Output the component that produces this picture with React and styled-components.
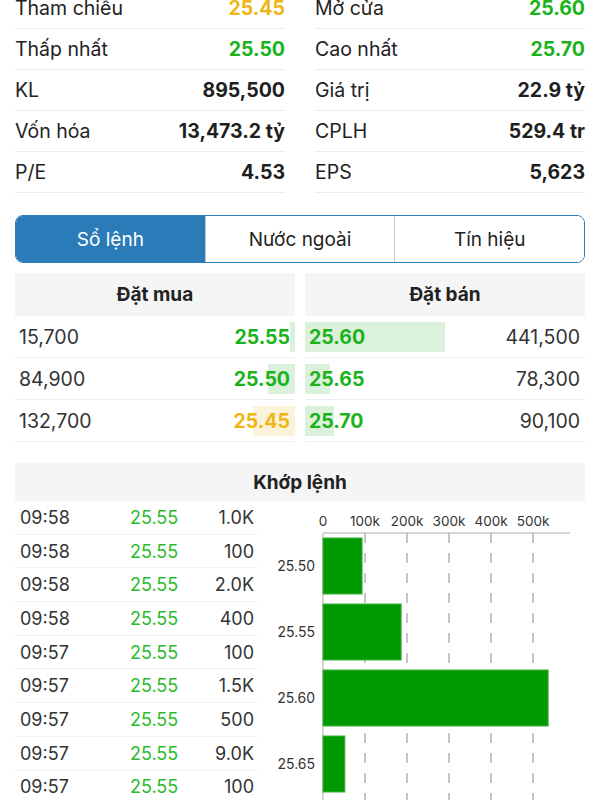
import { Fragment } from "react";
import styled, { createGlobalStyle } from "styled-components";

const GlobalStyle = createGlobalStyle`
  body {
    margin: 0;
    background: #ffffff;
    font-family: Inter, "Noto Sans", sans-serif;
    color: #1f1f1f;
  }
`;

const GREEN = "#1bb21b";
const YELLOW = "#efb615";
const DARK = "#1f1f1f";

const stats = [
  ["Tham chiếu", "25.45", YELLOW, "Mở cửa", "25.60", GREEN],
  ["Thấp nhất", "25.50", GREEN, "Cao nhất", "25.70", GREEN],
  ["KL", "895,500", DARK, "Giá trị", "22.9 tỷ", DARK],
  ["Vốn hóa", "13,473.2 tỷ", DARK, "CPLH", "529.4 tr", DARK],
  ["P/E", "4.53", DARK, "EPS", "5,623", DARK],
];

const bids = [
  { qty: "15,700", vol: 15700, price: "25.55", color: GREEN, bar: "#dcf1dc" },
  { qty: "84,900", vol: 84900, price: "25.50", color: GREEN, bar: "#dcf1dc" },
  { qty: "132,700", vol: 132700, price: "25.45", color: YELLOW, bar: "#fbf2da" },
];

const asks = [
  { qty: "441,500", vol: 441500, price: "25.60" },
  { qty: "78,300", vol: 78300, price: "25.65" },
  { qty: "90,100", vol: 90100, price: "25.70" },
];

const trades = [
  ["09:58", "1.0K"],
  ["09:58", "100"],
  ["09:58", "2.0K"],
  ["09:58", "400"],
  ["09:57", "100"],
  ["09:57", "1.5K"],
  ["09:57", "500"],
  ["09:57", "9.0K"],
  ["09:57", "100"],
];

// matched volume per price, in thousands
const matched = [
  { price: "25.50", vol: 93 },
  { price: "25.55", vol: 186 },
  { price: "25.60", vol: 536 },
  { price: "25.65", vol: 52 },
];

const BAR_SCALE = 140 / 441500;

export default function App() {
  return (
    <Page>
      <GlobalStyle />
      <StatsGrid>
        {stats.map((s) => (
          <Fragment key={s[0]}>
            <StatRow>
              <Label>{s[0]}</Label>
              <Value $color={s[2]}>{s[1]}</Value>
            </StatRow>
            <StatRow>
              <Label>{s[3]}</Label>
              <Value $color={s[5]}>{s[4]}</Value>
            </StatRow>
          </Fragment>
        ))}
      </StatsGrid>

      <Tabs>
        <Tab $active>Sổ lệnh</Tab>
        <Tab>Nước ngoài</Tab>
        <Tab>Tín hiệu</Tab>
      </Tabs>

      <OrderBook>
        <BookSide>
          <BookHeader>Đặt mua</BookHeader>
          {bids.map((b) => (
            <BookRow key={b.price}>
              <DepthBar $side="right" $color={b.bar} style={{ width: b.vol * BAR_SCALE }} />
              <Qty>{b.qty}</Qty>
              <Price $color={b.color}>{b.price}</Price>
            </BookRow>
          ))}
        </BookSide>
        <BookSide>
          <BookHeader>Đặt bán</BookHeader>
          {asks.map((a) => (
            <BookRow key={a.price}>
              <DepthBar $side="left" $color="#dcf1dc" style={{ width: a.vol * BAR_SCALE }} />
              <Price $color={GREEN}>{a.price}</Price>
              <Qty>{a.qty}</Qty>
            </BookRow>
          ))}
        </BookSide>
      </OrderBook>

      <MatchHeader>Khớp lệnh</MatchHeader>
      <MatchBody>
        <TradeList>
          {trades.map((t, i) => (
            <TradeRow key={i}>
              <span>{t[0]}</span>
              <TradePrice>25.55</TradePrice>
              <TradeVol>{t[1]}</TradeVol>
            </TradeRow>
          ))}
        </TradeList>
        <VolumeChart />
      </MatchBody>
    </Page>
  );
}

function VolumeChart() {
  const x0 = 65;
  const k = 0.42;
  const ticks = [0, 100, 200, 300, 400, 500];
  return (
    <svg width="327" height="300" viewBox="0 0 327 300">
      {ticks.map((t) => (
        <text
          key={t}
          x={x0 + t * k}
          y="25"
          textAnchor="middle"
          fontSize="13.5"
          fill="#333"
          fontFamily="Inter, sans-serif"
        >
          {t === 0 ? "0" : `${t}k`}
        </text>
      ))}
      <line x1={x0} y1="32" x2="312" y2="32" stroke="#c8c8c8" strokeWidth="1.5" />
      <line x1={x0} y1="32" x2={x0} y2="300" stroke="#c8c8c8" strokeWidth="1.5" />
      {ticks.slice(1).map((t) => (
        <line
          key={t}
          x1={x0 + t * k}
          y1="32"
          x2={x0 + t * k}
          y2="300"
          stroke="#b4b4b4"
          strokeWidth="1.5"
          strokeDasharray="10 10"
        />
      ))}
      {matched.map((m, i) => (
        <g key={m.price}>
          <rect
            x={x0}
            y={37 + i * 66}
            width={m.vol * k}
            height="56"
            fill="#009a00"
            stroke="#3fae3f"
            strokeWidth="1"
          />
          <text
            x="57"
            y={37 + i * 66 + 33}
            textAnchor="end"
            fontSize="14"
            fill="#333"
            fontFamily="Inter, sans-serif"
          >
            {m.price}
          </text>
        </g>
      ))}
    </svg>
  );
}

const Page = styled.div`
  width: 600px;
  height: 800px;
  overflow: hidden;
`;

const StatsGrid = styled.div`
  display: grid;
  grid-template-columns: 1fr 1fr;
  column-gap: 30px;
  padding: 0 15px;
  margin-top: -12px;
`;

const StatRow = styled.div`
  display: flex;
  justify-content: space-between;
  align-items: center;
  height: 40px;
  border-bottom: 1px solid #ececec;
`;

const Label = styled.span`
  font-size: 19.5px;
  color: #222;
`;

const Value = styled.span`
  font-size: 19.5px;
  font-weight: 700;
  color: ${(p) => p.$color};
`;

const Tabs = styled.div`
  display: flex;
  margin: 22px 15px 0;
  height: 46px;
  border: 1.5px solid #2b7bb9;
  border-radius: 8px;
  overflow: hidden;
`;

const Tab = styled.div`
  flex: 1;
  display: flex;
  align-items: center;
  justify-content: center;
  font-size: 19px;
  color: ${(p) => (p.$active ? "#ffffff" : "#222")};
  background: ${(p) => (p.$active ? "#2b7bb9" : "#ffffff")};
  & + & {
    border-left: 1px solid #c9c9c9;
  }
`;

const OrderBook = styled.div`
  display: grid;
  grid-template-columns: 1fr 1fr;
  column-gap: 10px;
  margin: 10px 15px 0;
`;

const BookSide = styled.div`
  display: flex;
  flex-direction: column;
`;

const BookHeader = styled.div`
  height: 43px;
  display: flex;
  align-items: center;
  justify-content: center;
  background: #f5f5f5;
  font-size: 19px;
  font-weight: 700;
  color: #222;
`;

const BookRow = styled.div`
  position: relative;
  display: flex;
  justify-content: space-between;
  align-items: center;
  height: 41px;
  padding: 0 5px 0 4px;
  border-bottom: 1px solid #eeeeee;
`;

const DepthBar = styled.div`
  position: absolute;
  top: 6px;
  bottom: 5px;
  ${(p) => p.$side}: 0;
  background: ${(p) => p.$color};
`;

const Qty = styled.span`
  position: relative;
  font-size: 19.5px;
  color: #333;
`;

const Price = styled.span`
  position: relative;
  font-size: 19.5px;
  font-weight: 700;
  color: ${(p) => p.$color};
`;

const MatchHeader = styled.div`
  margin: 21px 15px 0;
  height: 38px;
  display: flex;
  align-items: center;
  justify-content: center;
  background: #f5f5f5;
  font-size: 19px;
  font-weight: 700;
  color: #222;
`;

const MatchBody = styled.div`
  display: grid;
  grid-template-columns: 243px 327px;
  margin: 0 15px;
`;

const TradeList = styled.div`
  display: flex;
  flex-direction: column;
`;

const TradeRow = styled.div`
  display: grid;
  grid-template-columns: 110px 1fr auto;
  align-items: center;
  height: 32.7px;
  padding: 0 4px 0 5px;
  border-bottom: 1px solid #f0f0f0;
  font-size: 18px;
  color: #333;
`;

const TradePrice = styled.span`
  color: #2cbb2c;
`;

const TradeVol = styled.span`
  text-align: right;
`;
